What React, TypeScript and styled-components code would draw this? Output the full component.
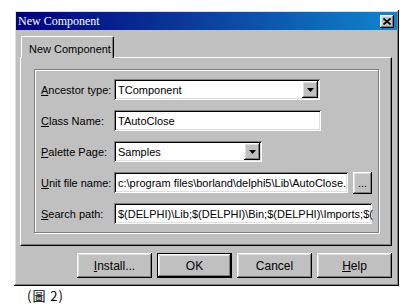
import React from "react";
import styled, { createGlobalStyle } from "styled-components";

const GlobalStyle = createGlobalStyle`
  html, body {
    margin: 0;
    padding: 0;
    background: #ffffff;
  }
  body {
    font-family: "Liberation Sans", Arial, sans-serif;
    font-size: 11px;
  }
`;

const raised = `
  box-shadow: inset -1px -1px #000000, inset 1px 1px #ffffff,
    inset -2px -2px #808080, inset 2px 2px #dfdfdf;
`;

const sunken = `
  box-shadow: inset 1px 1px #808080, inset -1px -1px #ffffff,
    inset 2px 2px #000000, inset -2px -2px #dfdfdf;
`;

const Page = styled.div`
  padding: 10px 0 0 14px;
`;

const Window = styled.div`
  width: 385px;
  box-sizing: border-box;
  padding: 2px;
  background: #c0c0c0;
  ${raised}
`;

const TitleBar = styled.div`
  height: 18px;
  display: flex;
  align-items: center;
  justify-content: space-between;
  padding: 0 3px 0 2px;
  background: linear-gradient(90deg, #000080 0%, #0a3a9a 45%, #1084d0 100%);
  color: #ffffff;
  font-family: "Liberation Serif", "Times New Roman", serif;
  font-size: 12px;
`;

const CloseButton = styled.div`
  width: 14px;
  height: 13px;
  display: flex;
  align-items: center;
  justify-content: center;
  background: #c0c0c0;
  ${raised}
`;

const Body = styled.div`
  padding: 6px 5px 6px 4px;
  display: flex;
  flex-direction: column;
`;

const TabStrip = styled.div`
  display: flex;
  height: 21px;
  padding-left: 1px;
`;

const Tab = styled.div`
  width: 93px;
  box-sizing: border-box;
  display: flex;
  align-items: center;
  padding: 2px 0 0 7px;
  font-size: 11px;
  white-space: nowrap;
  border-top: 1px solid #ffffff;
  border-left: 1px solid #ffffff;
  border-right: 1px solid #000000;
  border-radius: 2px 2px 0 0;
  box-shadow: inset -1px 0 #808080;
  margin-bottom: -1px;
  position: relative;
  z-index: 1;
  background: #c0c0c0;
`;

const Panel = styled.div`
  height: 189px;
  box-sizing: border-box;
  padding: 11px 12px 12px 13px;
  border-top: 1px solid #ffffff;
  border-left: 1px solid #ffffff;
  border-right: 1px solid #000000;
  border-bottom: 1px solid #000000;
  box-shadow: inset -1px -1px #808080;
`;

const Group = styled.div`
  height: 100%;
  box-sizing: border-box;
  border: 1px solid #808080;
  box-shadow: 1px 1px 0 #ffffff, inset 1px 1px 0 #ffffff;
  padding: 9px 0 0 6px;
  display: flex;
  flex-direction: column;
  gap: 10px;
`;

const Row = styled.div`
  display: flex;
  align-items: center;
  height: 21px;
`;

const Label = styled.div`
  width: 73px;
  flex: none;
  white-space: nowrap;
  font-size: 11px;
  color: #000000;
`;

const Field = styled.div<{ $w: number }>`
  width: ${(p) => p.$w}px;
  height: 21px;
  box-sizing: border-box;
  display: flex;
  align-items: center;
  padding: 0 2px 0 4px;
  background: #ffffff;
  font-size: 11px;
  white-space: nowrap;
  ${sunken}
`;

const FieldText = styled.span`
  flex: 1;
`;

const DropButton = styled.div`
  width: 16px;
  height: 17px;
  flex: none;
  display: flex;
  align-items: center;
  justify-content: center;
  background: #c0c0c0;
  ${raised}
`;

const SmallButton = styled.div`
  width: 19px;
  height: 22px;
  margin-left: 5px;
  box-sizing: border-box;
  display: flex;
  align-items: flex-end;
  justify-content: center;
  padding-bottom: 5px;
  background: #c0c0c0;
  font-size: 11px;
  ${raised}
`;

const ButtonBar = styled.div`
  display: flex;
  justify-content: flex-end;
  gap: 5px;
  margin-top: 7px;
`;

const Button = styled.div<{ $default?: boolean }>`
  width: 75px;
  height: 25px;
  box-sizing: border-box;
  display: flex;
  align-items: center;
  justify-content: center;
  background: #c0c0c0;
  font-size: 12px;
  ${raised}
  ${(p) =>
    p.$default &&
    `box-shadow: inset 0 0 0 1px #000000, inset -2px -2px #000000, inset 2px 2px #ffffff,
      inset -3px -3px #808080, inset 3px 3px #dfdfdf;`}
`;

const Caption = styled.div`
  margin: 3px 0 0 13px;
  font-family: "Noto Sans CJK TC", "Noto Sans CJK SC", sans-serif;
  font-size: 13px;
  line-height: 14px;
  letter-spacing: 1px;
  color: #000000;
`;

const Arrow = () => (
  <svg width="7" height="4" viewBox="0 0 7 4">
    <path d="M0 0h7L3.5 4z" fill="#000" />
  </svg>
);

const CloseX = () => (
  <svg width="8" height="7" viewBox="0 0 8 7">
    <path d="M0.5 0.5L7.5 6.5M7.5 0.5L0.5 6.5" stroke="#000" strokeWidth="1.6" />
  </svg>
);

const App: React.FC = () => {
  return (
    <Page>
      <GlobalStyle />
      <Window>
        <TitleBar>
          <span>New Component</span>
          <CloseButton>
            <CloseX />
          </CloseButton>
        </TitleBar>
        <Body>
          <TabStrip>
            <Tab>New Component</Tab>
          </TabStrip>
          <Panel>
            <Group>
              <Row>
                <Label>
                  <u>A</u>ncestor type:
                </Label>
                <Field $w={206}>
                  <FieldText>TComponent</FieldText>
                  <DropButton>
                    <Arrow />
                  </DropButton>
                </Field>
              </Row>
              <Row>
                <Label>
                  <u>C</u>lass Name:
                </Label>
                <Field $w={207}>
                  <FieldText>TAutoClose</FieldText>
                </Field>
              </Row>
              <Row>
                <Label>
                  <u>P</u>alette Page:
                </Label>
                <Field $w={148}>
                  <FieldText>Samples</FieldText>
                  <DropButton>
                    <Arrow />
                  </DropButton>
                </Field>
              </Row>
              <Row>
                <Label>
                  <u>U</u>nit file name:
                </Label>
                <Field $w={234}>
                  <FieldText>c:\program files\borland\delphi5\Lib\AutoClose.</FieldText>
                </Field>
                <SmallButton>...</SmallButton>
              </Row>
              <Row>
                <Label>
                  <u>S</u>earch path:
                </Label>
                <Field $w={258}>
                  <FieldText>$(DELPHI)\Lib;$(DELPHI)\Bin;$(DELPHI)\Imports;$(</FieldText>
                </Field>
              </Row>
            </Group>
          </Panel>
          <ButtonBar>
            <Button>
              <span>
                <u>I</u>nstall...
              </span>
            </Button>
            <Button $default>OK</Button>
            <Button>Cancel</Button>
            <Button>
              <span>
                <u>H</u>elp
              </span>
            </Button>
          </ButtonBar>
        </Body>
      </Window>
      <Caption>(圖 2)</Caption>
    </Page>
  );
};

export default App;
